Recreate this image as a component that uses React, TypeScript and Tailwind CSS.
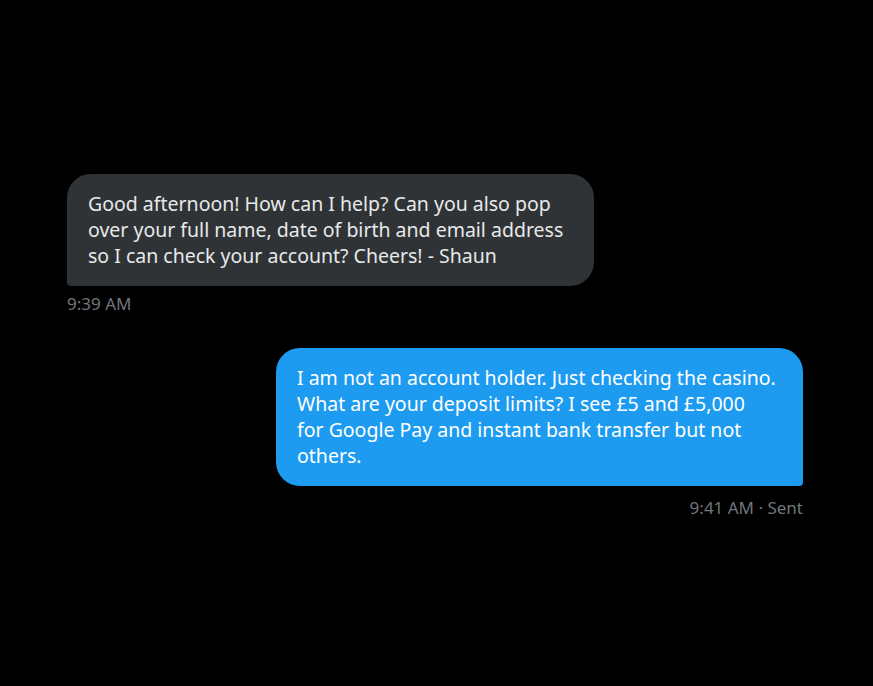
export default function App() {
  return (
    <div className="min-h-screen bg-black" style={{ fontFamily: '"Noto Sans", "Open Sans", sans-serif' }}>
      <div className="flex flex-col px-[67px] pt-[174px] pr-[70px]">
        <div className="flex flex-col items-start">
          <div className="max-w-[527px] rounded-[24px] rounded-bl-[4px] bg-[#2f3336] px-[21px] py-[17px] text-[19.5px] leading-[26px] text-[#e7e9ea]">
            Good afternoon! How can I help? Can you also pop over your full name, date of birth and email address so I can check your account? Cheers! - Shaun
          </div>
          <div className="mt-[8px] text-[17px] leading-[20px] text-[#71767b]">9:39 AM</div>
        </div>

        <div className="mt-[34px] flex flex-col items-end">
          <div className="w-[527px] rounded-[24px] rounded-br-[4px] bg-[#1d9bf0] px-[21px] py-[17px] text-[19.5px] leading-[26px] text-white">
            I am not an account holder. Just checking the casino. What are your deposit limits? I see £5 and £5,000
            <br />
            for Google Pay and instant bank transfer but not others.
          </div>
          <div className="mt-[12px] text-[17px] leading-[20px] text-[#71767b]">9:41 AM · Sent</div>
        </div>
      </div>
    </div>
  );
}
